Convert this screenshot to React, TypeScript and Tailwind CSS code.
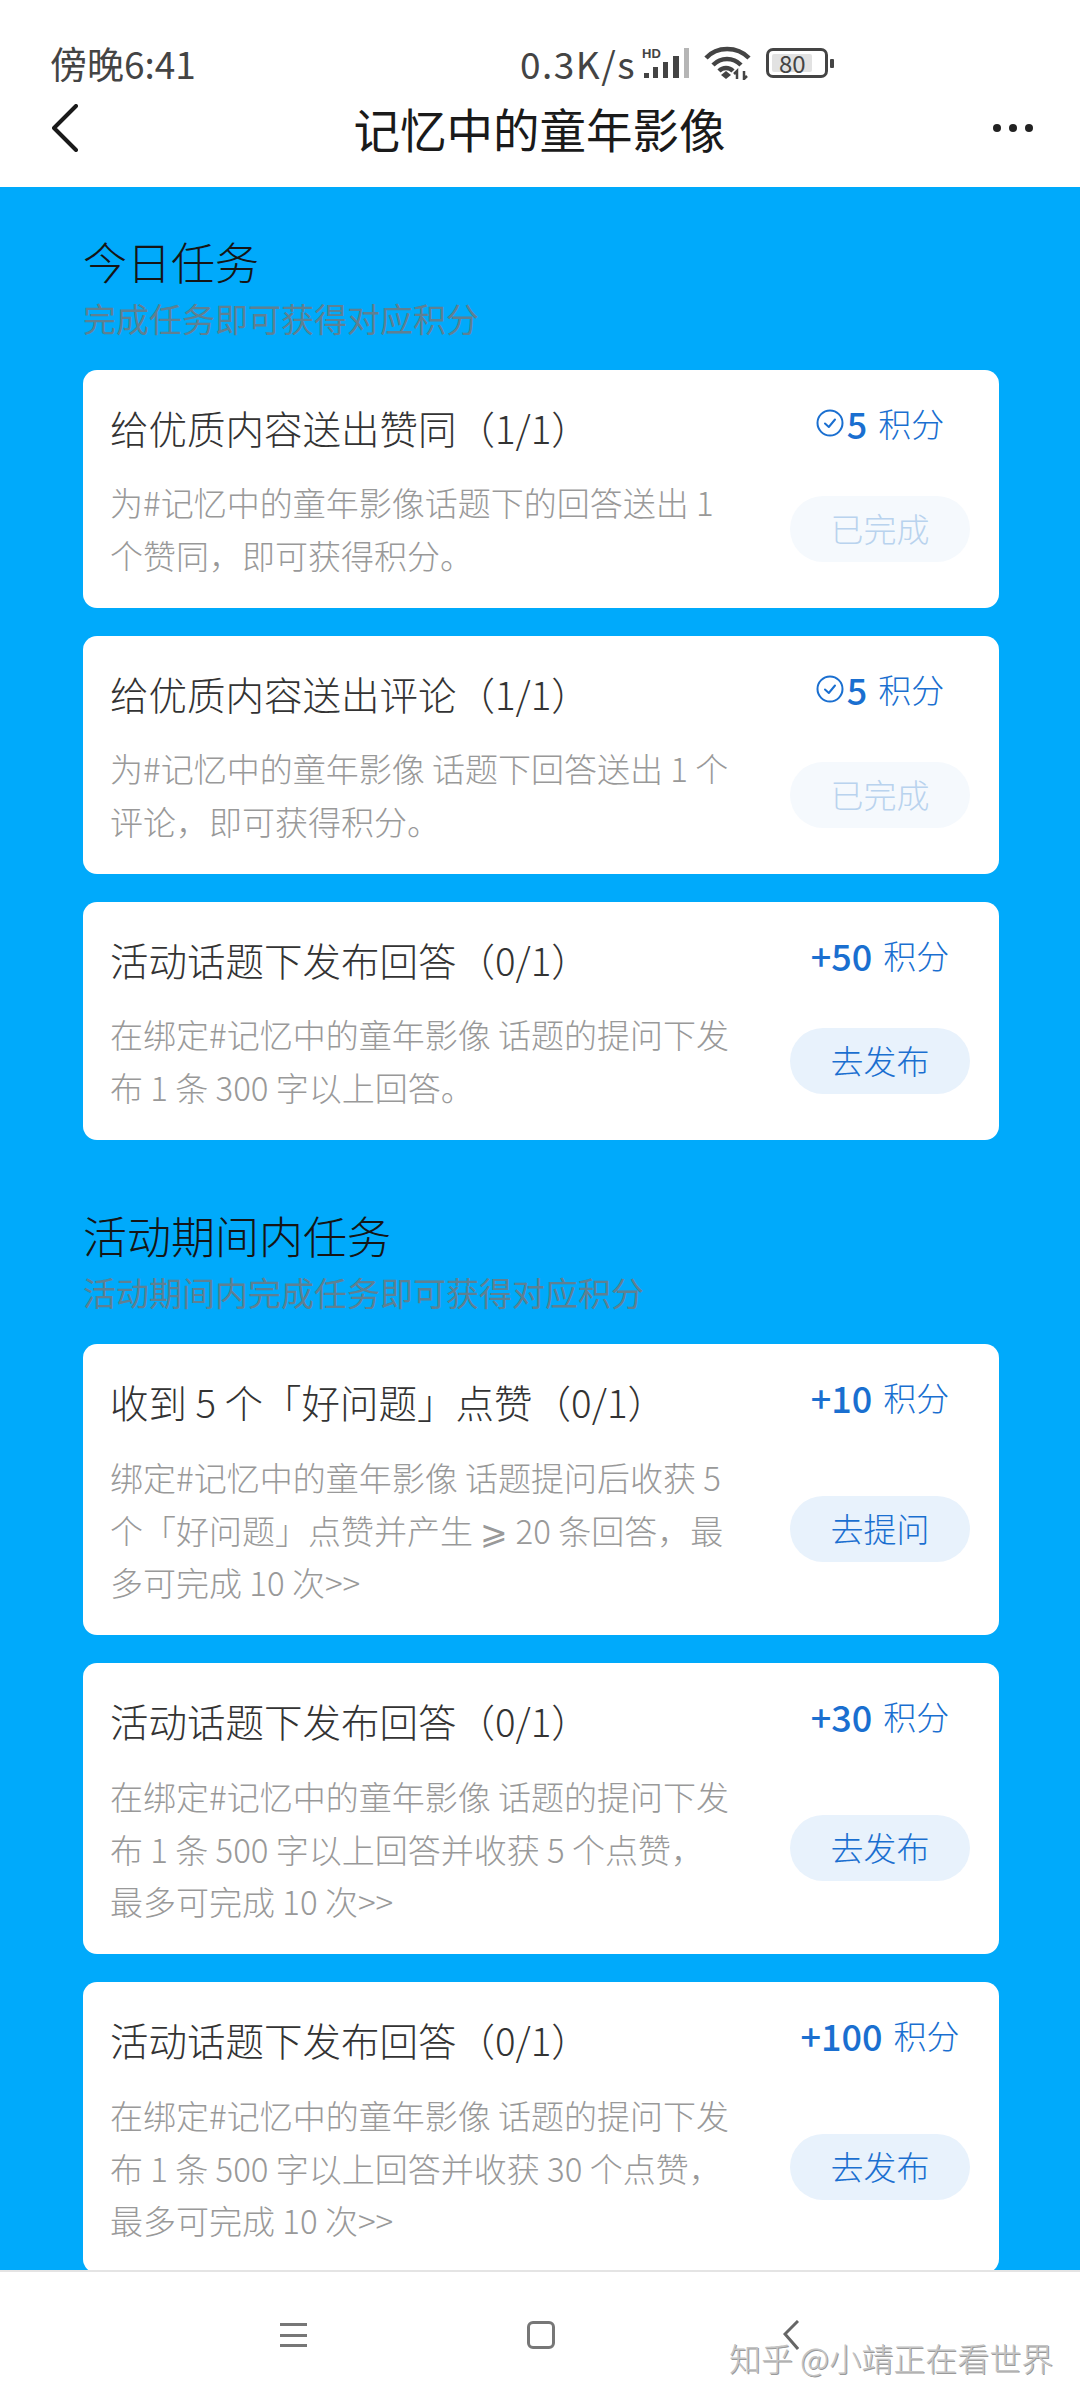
import React from 'react';

const font = { fontFamily: '"Noto Sans CJK SC", "Noto Sans", sans-serif' };

type Task = {
  title: string;
  lines: string[];
  points: string;
  done?: boolean;
  action: string;
};

const today: Task[] = [
  {
    title: '给优质内容送出赞同（1/1）',
    lines: ['为#记忆中的童年影像话题下的回答送出 1', '个赞同，即可获得积分。'],
    points: '5',
    done: true,
    action: '已完成',
  },
  {
    title: '给优质内容送出评论（1/1）',
    lines: ['为#记忆中的童年影像 话题下回答送出 1 个', '评论，即可获得积分。'],
    points: '5',
    done: true,
    action: '已完成',
  },
  {
    title: '活动话题下发布回答（0/1）',
    lines: ['在绑定#记忆中的童年影像 话题的提问下发', '布 1 条 300 字以上回答。'],
    points: '+50',
    action: '去发布',
  },
];

const period: Task[] = [
  {
    title: '收到 5 个「好问题」点赞（0/1）',
    lines: ['绑定#记忆中的童年影像 话题提问后收获 5', '个「好问题」点赞并产生 ⩾ 20 条回答，最', '多可完成 10 次>>'],
    points: '+10',
    action: '去提问',
  },
  {
    title: '活动话题下发布回答（0/1）',
    lines: ['在绑定#记忆中的童年影像 话题的提问下发', '布 1 条 500 字以上回答并收获 5 个点赞，', '最多可完成 10 次>>'],
    points: '+30',
    action: '去发布',
  },
  {
    title: '活动话题下发布回答（0/1）',
    lines: ['在绑定#记忆中的童年影像 话题的提问下发', '布 1 条 500 字以上回答并收获 30 个点赞，', '最多可完成 10 次>>'],
    points: '+100',
    action: '去发布',
  },
];

function StatusBar() {
  return (
    <div className="flex h-[44px] items-center pl-[50px] text-[#444444]">
      <span className="w-[470px] text-[37px] leading-[44px] whitespace-nowrap">傍晚6:41</span>
      <span className="w-[120px] text-[37px] leading-[44px] tracking-[1.5px] whitespace-nowrap">0.3K/s</span>
      {/* signal with HD mark */}
      <svg width="52" height="32" viewBox="0 0 52 32" fill="#444444">
        <text x="2" y="11" fontSize="13" fontWeight="700" fontFamily="Liberation Sans">HD</text>
        <rect x="4" y="26" width="5" height="5" />
        <rect x="13" y="20" width="5" height="11" />
        <rect x="23" y="15" width="5" height="16" />
        <rect x="33" y="9" width="6" height="22" />
        <rect x="44" y="1" width="5" height="30" fill="#b5b5b5" />
      </svg>
      <svg width="48" height="34" viewBox="0 0 48 34" className="ml-[12px]" fill="none" stroke="#444444" strokeWidth="4.5">
        <path d="M2 12 C13 0 33 0 45 12" />
        <path d="M9 19 C17 11 29 11 37 19" />
        <path d="M15 25 C19 21 25 21 29 25" />
        <path d="M17 29 L22 25 L27 29 L22 33 Z" fill="#444444" stroke="none" />
        <path d="M33 33 V25 L30 28 M40 25 V33 L43 30" strokeWidth="2.5" />
      </svg>
      <div className="ml-[14px] flex h-[30px] w-[62px] items-center rounded-[7px] border-[3px] border-[#444444] px-[3px]">
        <div className="flex h-[18px] w-[40px] items-center rounded-[2px] bg-[#e2e2e2] pl-[7px] text-[24px] leading-none">80</div>
      </div>
      <div className="ml-[2px] h-[9px] w-[4px] rounded-[1px] bg-[#444444]" />
    </div>
  );
}

function NavBar() {
  return (
    <div className="flex h-[86px] items-center pr-[47px] pl-[52px]">
      <svg width="26" height="48" viewBox="0 0 26 48" fill="none" stroke="#1a1a1a" strokeWidth="4" strokeLinecap="round" strokeLinejoin="round">
        <path d="M24 2 L2 24 L24 46" />
      </svg>
      <h1 className="flex-1 pl-[8px] text-center text-[46.5px] leading-[60px] font-normal whitespace-nowrap text-[#1a1a1a]">记忆中的童年影像</h1>
      <div className="flex gap-[8px]">
        <span className="size-[8px] rounded-full bg-[#222222]" />
        <span className="size-[8px] rounded-full bg-[#222222]" />
        <span className="size-[8px] rounded-full bg-[#222222]" />
      </div>
    </div>
  );
}

function CheckCircle() {
  return (
    <svg width="28" height="28" viewBox="0 0 28 28" fill="none" stroke="#1a6fd0" strokeWidth="2" className="mr-[3px]">
      <circle cx="14" cy="14" r="12.5" />
      <path d="M9 14.5 L12.8 18 L19 10.5" strokeLinecap="round" strokeLinejoin="round" />
    </svg>
  );
}

function TaskCard({ task }: { task: Task }) {
  const tall = task.lines.length > 2;
  return (
    <div
      className={`grid grid-cols-[1fr_180px] rounded-[14px] bg-white pt-[30px] pr-[29px] pl-[27px] ${
        tall ? 'h-[291px] grid-rows-[77px_1fr]' : 'h-[238px] grid-rows-[76px_1fr]'
      }`}
    >
      <div className="text-[38.5px] leading-[54px] font-light whitespace-nowrap text-[#333333]">{task.title}</div>
      <div className="mt-[-2px] flex h-[50px] items-center justify-center whitespace-nowrap text-[#1a6fd0]">
        {task.done && <CheckCircle />}
        <span className="text-[36px] leading-[50px] font-medium">{task.points}</span>
        <span className="ml-[11px] text-[33px] leading-[50px] font-light">积分</span>
      </div>
      <div className="text-[33px] leading-[52.5px] font-light whitespace-nowrap text-[#999999]">
        {task.lines.map((line) => (
          <div key={line}>{line}</div>
        ))}
      </div>
      <div
        className={`flex h-[66px] items-center justify-center rounded-full text-[33px] font-light ${
          task.done ? 'bg-[#f5f9fd] text-[#b9d3ee]' : 'bg-[#e8f2fc] text-[#1a6fd0]'
        } ${tall ? 'mt-[45px]' : 'mt-[20px]'}`}
      >
        {task.action}
      </div>
    </div>
  );
}

function Section({ title, note, tasks, className }: { title: string; note: string; tasks: Task[]; className: string }) {
  return (
    <section className={className}>
      <h2 className="text-[44px] leading-[60px] font-light whitespace-nowrap text-[#151515]">{title}</h2>
      <p className="mt-[3px] mb-[28px] text-[33px] leading-[48px] font-normal whitespace-nowrap text-[#5f8092]">{note}</p>
      <div className="flex flex-col gap-[28px]">
        {tasks.map((task, i) => (
          <TaskCard key={i} task={task} />
        ))}
      </div>
    </section>
  );
}

export default function App() {
  return (
    <div className="relative flex h-[2400px] w-[1080px] flex-col overflow-hidden bg-white" style={font}>
      <header className="h-[187px] shrink-0 bg-white pt-[41px]">
        <StatusBar />
        <NavBar />
      </header>
      <main className="h-[2083px] shrink-0 overflow-hidden bg-[#00aafb] pr-[81px] pl-[83px]">
        <Section title="今日任务" note="完成任务即可获得对应积分" tasks={today} className="pt-[44px]" />
        <Section title="活动期间内任务" note="活动期间内完成任务即可获得对应积分" tasks={period} className="pt-[65px]" />
      </main>
      <footer className="relative flex h-[130px] shrink-0 items-start border-t-2 border-[#e4e4e4] bg-white pt-[51px]">
        <div className="ml-[280px] flex h-[24px] w-[27px] flex-col justify-between">
          <span className="h-[3px] bg-[#777777]" />
          <span className="h-[3px] bg-[#777777]" />
          <span className="h-[3px] bg-[#777777]" />
        </div>
        <div className="-mt-[2px] ml-[220px] size-[28px] rounded-[6px] border-[3px] border-[#777777]" />
        <svg width="16" height="30" viewBox="0 0 16 30" fill="none" stroke="#666666" strokeWidth="3" className="-mt-[3px] ml-[228px]">
          <path d="M15 1 L2 14 L15 29" />
        </svg>
        <span className="absolute top-[69px] left-[729px] text-[32px] leading-[32px] font-light whitespace-nowrap text-[#c4c4c4] [text-shadow:1px_1px_0_#9a9a9a]">
          知乎 @小靖正在看世界
        </span>
      </footer>
    </div>
  );
}
